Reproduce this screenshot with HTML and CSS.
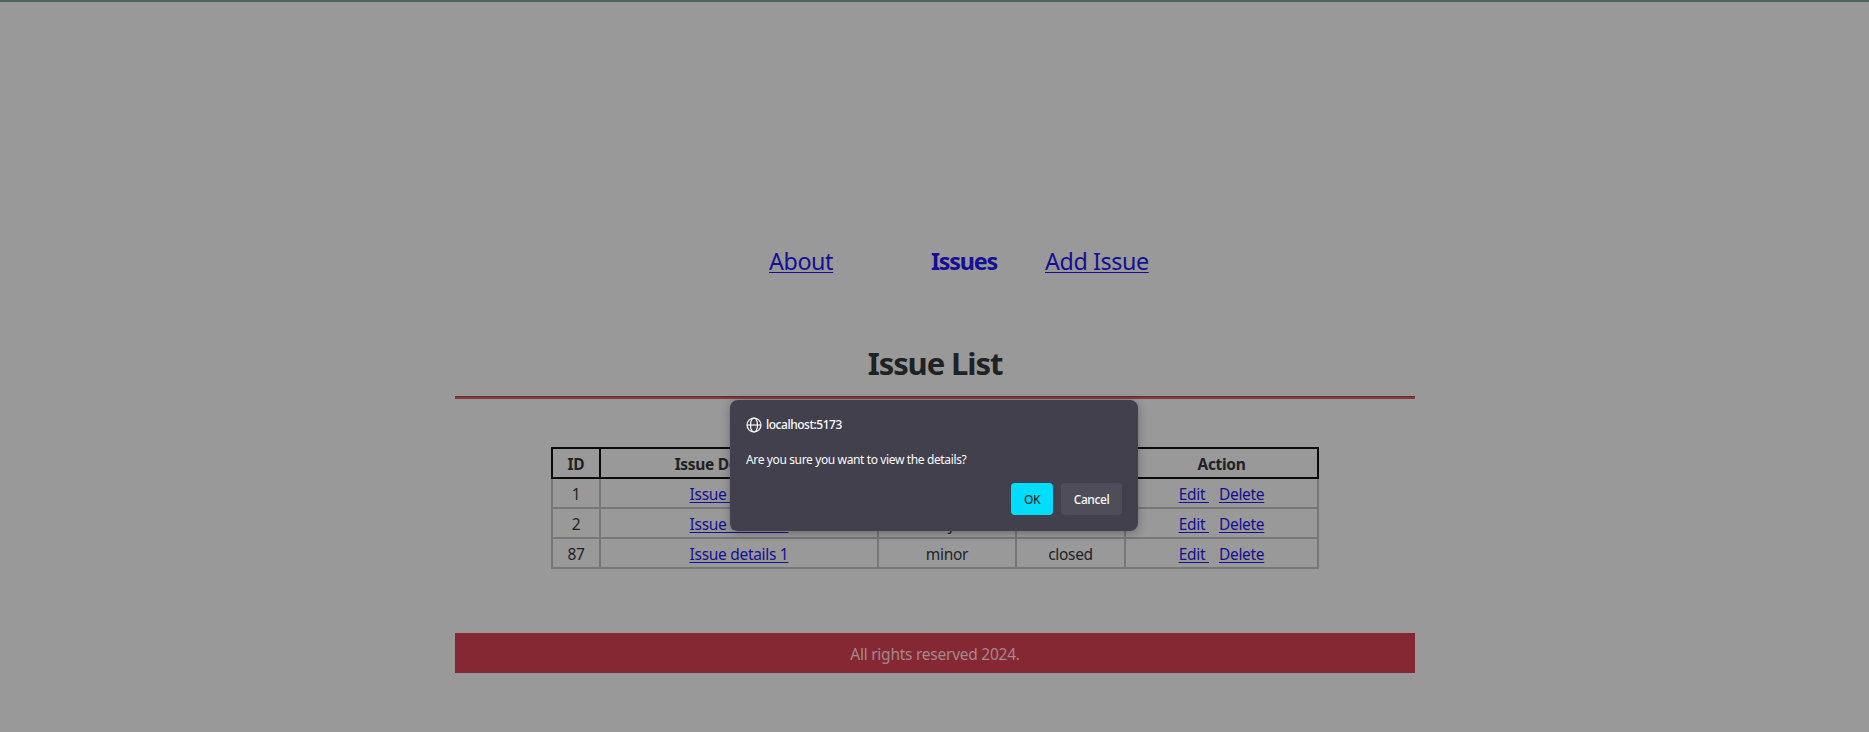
FILE: index.html
```html
<!DOCTYPE html>
<html lang="en">
<head>
<meta charset="utf-8">
<title>Issue List</title>
<link rel="stylesheet" href="styles.css">
</head>
<body>
<main class="page">
  <nav class="nav">
    <a class="nav-about" href="#"><span>About</span></a>
    <a class="nav-issues" href="#">Issues</a>
    <a class="nav-add" href="#">Add Issue</a>
  </nav>
  <h1 class="title">Issue List</h1>
  <div class="rule"></div>
  <table class="issues">
    <colgroup><col class="c-id"><col class="c-desc"><col class="c-sev"><col class="c-status"><col class="c-action"></colgroup>
    <thead>
      <tr><th>ID</th><th>Issue Description</th><th>Severity</th><th>Status</th><th>Action</th></tr>
    </thead>
    <tbody>
      <tr><td>1</td><td><a class="detail" href="#">Issue details 1</a></td><td>minor</td><td>open</td><td><a class="edit" href="#">Edit </a><a class="delete" href="#">Delete</a></td></tr>
      <tr><td>2</td><td><a class="detail" href="#">Issue details 2</a></td><td>major</td><td>closed</td><td><a class="edit" href="#">Edit </a><a class="delete" href="#">Delete</a></td></tr>
      <tr><td>87</td><td><a class="detail" href="#">Issue details 1</a></td><td>minor</td><td>closed</td><td><a class="edit" href="#">Edit </a><a class="delete" href="#">Delete</a></td></tr>
    </tbody>
  </table>
  <footer class="footer"><span>All rights reserved 2024.</span></footer>
</main>
<div class="dialog" role="dialog">
  <div class="origin">
    <svg class="globe" viewBox="0 0 16 16" fill="none" stroke="#fbfbfe" stroke-width="1.2"><circle cx="8" cy="8" r="7"/><ellipse cx="8" cy="8" rx="3.5" ry="7"/><path d="M1 8h14"/></svg>
    <span>localhost:5173</span>
  </div>
  <p class="message">Are you sure you want to view the details?</p>
  <div class="buttons"><button class="ok">OK</button><button class="cancel">Cancel</button></div>
</div>
</body>
</html>
```

FILE: styles.css
```css
* { box-sizing: border-box; }
body {
  margin: 0;
  height: 732px;
  overflow: hidden;
  background: #99999a;
  border-top: 2px solid #4a6357;
  color: #1f2225;
  font: 15.5px/24px "Noto Sans", "Open Sans", sans-serif;
}
a { color: #150f93; text-underline-offset: 2px; text-decoration-thickness: 1px; }
.page { width: 960px; margin-left: 455px; padding-top: 242px; }
.nav { display: flex; height: 36px; padding-left: 314px; font-size: 23.3px; line-height: 35px; letter-spacing: -0.4px; white-space: nowrap; }
.nav-about { width: 162px; }
.nav-issues { width: 114px; font-weight: 700; text-decoration: none; letter-spacing: -1.2px; }
.title { margin: 64px 0 0; height: 40px; font-size: 31px; line-height: 39px; text-align: center; letter-spacing: -1.1px; }
.rule { margin-top: 12px; height: 3px; background: #843a3e; border-top: 1px solid #6a2c31; }
.issues { width: 768px; margin: 48px auto 0; table-layout: fixed; border-collapse: collapse; text-align: center; letter-spacing: -0.3px; }
.c-id { width: 48px; }
.c-desc { width: 278px; }
.c-sev { width: 138px; }
.c-status { width: 109px; }
.c-action { width: 193px; }
.issues tr { height: 30px; }
.issues th, .issues td { padding: 3px 0 1px; border: 2px solid #777778; }
.issues th { border-color: #0b0b0c; }
.edit { margin-right: 10px; white-space: pre; }
.footer { margin-top: 64px; height: 40px; line-height: 42px; background: #862833; color: #a3888c; text-align: center; letter-spacing: -0.25px; }
.dialog {
  position: absolute;
  left: 730px;
  top: 400px;
  width: 408px;
  height: 131px;
  padding: 16px;
  border-radius: 8px;
  background: #42404d;
  color: #fbfbfe;
  box-shadow: 0 2px 10px rgba(20, 20, 30, 0.35);
  font-size: 12px;
  line-height: 16px;
}
.origin { display: flex; align-items: center; gap: 4px; height: 17px; font-weight: 500; letter-spacing: -0.48px; }
.globe { width: 16px; height: 16px; }
.message { margin: 19px 0 0; height: 16px; letter-spacing: -0.37px; }
.buttons { display: flex; justify-content: flex-end; gap: 8px; margin-top: 15px; }
.buttons button { height: 32px; padding: 0; border: 0; border-radius: 4px; font: 500 12px "Noto Sans", sans-serif; letter-spacing: -0.4px; }
.buttons .ok { width: 42px; background: #00ddff; color: #2b2a33; }
.buttons .cancel { width: 61px; background: #4f4d5a; color: #fbfbfe; }
```
